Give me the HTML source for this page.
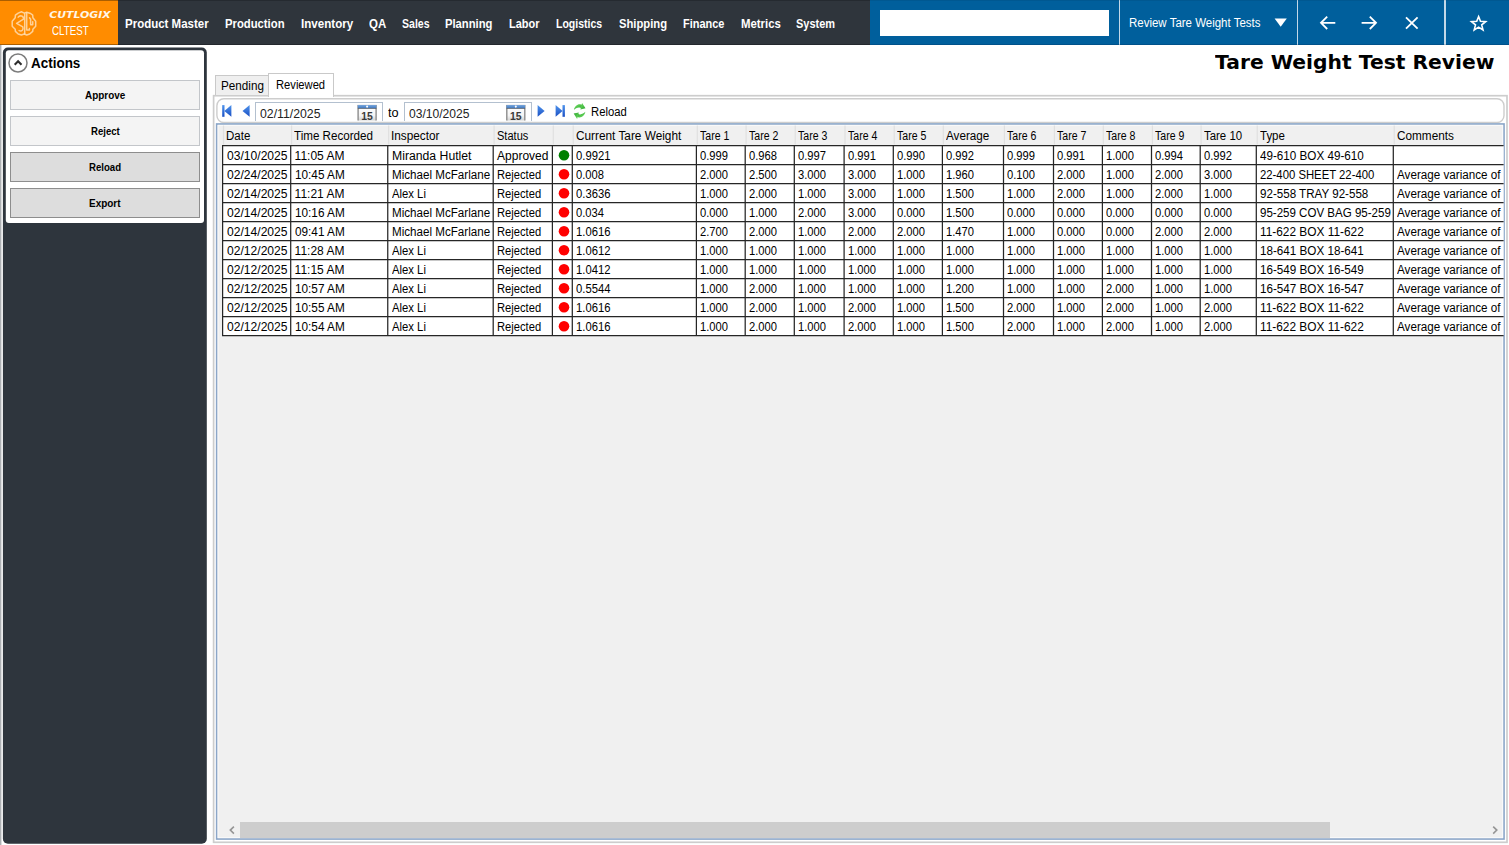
<!DOCTYPE html><html><head><meta charset="utf-8"><title>Tare Weight Test Review</title><style>
html,body{margin:0;padding:0}
body{width:1509px;height:845px;overflow:hidden;position:relative;background:#fff;font-family:"Liberation Sans", sans-serif;font-size:12px;color:#000}
.a{position:absolute}
.t{position:absolute;white-space:pre;line-height:1;display:block;transform-origin:0 50%}
svg{position:absolute;overflow:visible}

</style></head><body>
<!-- top bar -->
<div class="a" id="topbar" style="left:0;top:0;width:1509px;height:45px;background:#2f353c"></div>
<div class="a" id="logo" style="left:0;top:0;width:117.5px;height:45px;background:#ff8c00"></div>
<div class="a" id="bluebar" style="left:869.5px;top:0;width:639.5px;height:45px;background:#005f9c"></div>
<div class="a" id="search" style="left:879.5px;top:9.5px;width:229px;height:26px;background:#fff"></div>
<div class="a" style="left:1118.7px;top:0;width:1.5px;height:45px;background:#c2d8e8"></div>
<div class="a" style="left:1296.6px;top:0;width:1.5px;height:45px;background:#c2d8e8"></div>
<div class="a" style="left:1444px;top:0;width:1.5px;height:45px;background:#c2d8e8"></div>
<div class="a" style="left:0;top:0;width:117.5px;height:1px;background:rgba(0,0,0,0.33)"></div>
<div class="a" style="left:117.5px;top:0;width:752px;height:1px;background:rgba(0,0,0,0.2)"></div>
<div class="a" style="left:869.5px;top:0;width:639.5px;height:1px;background:rgba(0,0,0,0.07)"></div>
<div class="a" style="left:0;top:44px;width:117.5px;height:1px;background:rgba(0,0,0,0.33)"></div>
<div class="a" style="left:117.5px;top:44px;width:752px;height:1px;background:rgba(0,0,0,0.25)"></div>
<div class="a" style="left:869.5px;top:44px;width:639.5px;height:1px;background:rgba(0,20,60,0.18)"></div>
<svg style="left:0;top:0" width="1509" height="45" viewBox="0 0 1509 45">
  <!-- brain logo -->
  <g fill="none" stroke="#ffe1b8" stroke-opacity="0.82" stroke-width="1.5" stroke-linecap="round" stroke-linejoin="round">
    <path d="M21.4 11.8 L24.2 13.1 L26.7 12.2 L30.6 13.5 L32.7 15.2 L32.9 17.8 L35.7 21.2 L35.7 26.3 L32.9 29.3 L32.7 31.4 L29.7 34.0 L26.7 35.0 L24.2 34.0 L21.4 35.0 L18.2 34.0 L15.4 31.4 L15.2 29.3 L12.2 26.3 L12.2 21.2 L15.2 17.8 L15.4 15.2 L18.2 13.1 Z"/>
    <path d="M18.2 17.1 C19.9 15.0 23.7 15.7 23.5 19.1 L16.6 23.4 L22.8 26.9 C23.7 29.7 22.0 31.6 19.1 30.6"/>
    <path d="M24.7 13.7 L24.7 34.0"/>
    <path d="M26.7 13.1 L26.7 29.9 L29.4 29.9 L29.4 28.6"/>
    <path d="M29.5 17.8 L30.6 19.3 L30.6 24.7 L32.7 24.7 L32.7 21.8"/>
  </g>
  <!-- CUTLOGIX wordmark -->
  <text x="49.2" y="18.4" font-family="'DejaVu Sans','Liberation Sans',sans-serif" font-weight="700" font-style="oblique" font-size="8.1" fill="#fff6e8" textLength="61.5" lengthAdjust="spacingAndGlyphs">CUTLOGIX</text>
  <!-- dropdown triangle -->
  <path d="M1274.6 18.4 L1286.8 18.4 L1280.7 26.8 Z" fill="#fff"/>
  <!-- arrows -->
  <g fill="none" stroke="#fff" stroke-width="1.8" stroke-linecap="butt" stroke-linejoin="miter">
    <path d="M1335.3 22.8 L1321.3 22.8 M1327.2 16.6 L1321 22.8 L1327.2 29"/>
    <path d="M1361.6 22.8 L1375.6 22.8 M1369.8 16.6 L1376 22.8 L1369.8 29"/>
    <path d="M1406 17.3 L1417.6 28.7 M1417.6 17.3 L1406 28.7"/>
    <path d="M1478.6 16.6 L1480.5 21.3 L1485.7 21.6 L1481.7 24.9 L1483 29.9 L1478.6 27.1 L1474.2 29.9 L1475.5 24.9 L1471.5 21.6 L1476.7 21.3 Z" stroke-width="1.6"/>
  </g>
</svg>

<!-- left edge strip -->
<div class="a" style="left:0;top:45px;width:1px;height:800px;background:#adb0b3"></div><div class="a" style="left:1px;top:45px;width:1px;height:800px;background:#dcdddf"></div>
<!-- sidebar -->
<svg id="sidebar" style="left:0;top:0" width="210" height="845" viewBox="0 0 210 845">
  <rect x="2.9" y="47.5" width="203.9" height="796.2" rx="5" ry="5" fill="#2e353d"/>
  <rect x="5.8" y="50.2" width="198.2" height="172.8" rx="3" ry="3" fill="#fff"/>
</svg>
<svg style="left:0;top:45px" width="210" height="40" viewBox="0 45 210 40">
  <circle cx="18" cy="63" r="9" fill="#fff" stroke="#7c7c7c" stroke-width="1.5"/>
  <path d="M14.7 64.7 L18.1 61.3 L21.5 64.7" fill="none" stroke="#2e2e2e" stroke-width="2.1"/>
</svg>
<div class="a btn" style="left:10.3px;top:80.0px;width:187.4px;height:28.2px;background:#f4f4f4;border:1px solid #c3c6ca"></div>
<div class="a btn" style="left:10.3px;top:116.0px;width:187.4px;height:28.2px;background:#f4f4f4;border:1px solid #c3c6ca"></div>
<div class="a btn" style="left:10.3px;top:152.0px;width:187.4px;height:28.2px;background:#ddd;border:1px solid #8d8d8d"></div>
<div class="a btn" style="left:10.3px;top:188.0px;width:187.4px;height:28.2px;background:#ddd;border:1px solid #8d8d8d"></div>

<!-- tab control -->
<svg id="frames" style="left:0;top:0" width="1509" height="845" viewBox="0 0 1509 845">
  <rect x="213.6" y="95.7" width="1293.4" height="746.6" fill="#fff" stroke="#cdcdcd" stroke-width="1.7"/>
  <rect x="216.9" y="98.7" width="1287.1" height="23.8" rx="7" ry="7" fill="#fff" stroke="#cdcdcd" stroke-width="1.4"/>
  <rect x="216.7" y="124" width="1287.3" height="715" fill="#f0f0f0" stroke="#8ba6c8" stroke-width="1.7"/>
  <rect x="218" y="125.3" width="1284.7" height="712.4" fill="none" stroke="#fbfbfb" stroke-width="0.9"/>
</svg>
<div class="a" id="tab1" style="left:215.2px;top:75.1px;width:53.8px;height:20px;background:#efefef;border:1.4px solid #c9c9c9;border-bottom:none;box-sizing:border-box"></div>
<div class="a" id="tab2" style="left:268px;top:72.9px;width:66.4px;height:23.8px;background:#fff;border:1.4px solid #c9c9c9;border-bottom:none;box-sizing:border-box"></div>

<!-- toolbar -->
<div class="a" id="tbclip" style="left:217.4px;top:99.6px;width:1286px;height:21px;overflow:hidden">
  <div class="a" style="left:38px;top:2px;width:128px;height:24px;border:1px solid #b3c0cf;box-sizing:border-box;background:#fff"></div>
  <div class="a" style="left:186.6px;top:2px;width:128px;height:24px;border:1px solid #b3c0cf;box-sizing:border-box;background:#fff"></div>
</div>
<svg style="left:0;top:98px" width="640" height="26" viewBox="0 98 640 26">
  <defs>
    <linearGradient id="bl" x1="0" y1="0" x2="0" y2="1"><stop offset="0" stop-color="#4f94ec"/><stop offset="1" stop-color="#1a4fc4"/></linearGradient>
    <linearGradient id="cg" x1="0" y1="0" x2="0" y2="1"><stop offset="0" stop-color="#ffffff"/><stop offset="0.55" stop-color="#f4f4f4"/><stop offset="1" stop-color="#bdbdbd"/></linearGradient>
    <linearGradient id="ch" x1="0" y1="0" x2="0" y2="1"><stop offset="0" stop-color="#7aa7dc"/><stop offset="1" stop-color="#3f78bf"/></linearGradient>
    <clipPath id="tbc"><rect x="217" y="99" width="1290" height="21.6"/></clipPath>
  </defs>
  <g fill="url(#bl)">
    <rect x="222.2" y="105.1" width="2.3" height="11.7"/><path d="M231.4 105.1 L231.4 116.8 L224.3 110.95 Z"/>
    <path d="M249.6 105.1 L249.6 116.8 L242.5 110.95 Z"/>
    <path d="M537.6 105.1 L537.6 116.8 L544.6 110.95 Z"/>
    <path d="M555.6 105.1 L555.6 116.8 L562.6 110.95 Z"/><rect x="562.5" y="105.1" width="2.4" height="11.7"/>
  </g>
  <!-- calendar icons -->
  <g clip-path="url(#tbc)">
    <g>
      <rect x="358.1" y="105.6" width="18" height="18" fill="url(#cg)" stroke="#8d8d8d" stroke-width="1.4"/>
      <rect x="357.8" y="105" width="18.6" height="3.2" fill="url(#ch)"/>
      <rect x="357.8" y="108.1" width="18.6" height="0.8" fill="#5a6470"/>
      <circle cx="367.1" cy="106.6" r="1.05" fill="#fff"/>
      <text x="361.2" y="119.5" font-family="'Liberation Sans',sans-serif" font-size="10.2" font-weight="700" fill="#3a3a3a" textLength="11.6" lengthAdjust="spacingAndGlyphs">15</text>
    </g>
    <g>
      <rect x="506.8" y="105.6" width="18" height="18" fill="url(#cg)" stroke="#8d8d8d" stroke-width="1.4"/>
      <rect x="506.5" y="105" width="18.6" height="3.2" fill="url(#ch)"/>
      <rect x="506.5" y="108.1" width="18.6" height="0.8" fill="#5a6470"/>
      <circle cx="515.8" cy="106.6" r="1.05" fill="#fff"/>
      <text x="509.9" y="119.5" font-family="'Liberation Sans',sans-serif" font-size="10.2" font-weight="700" fill="#3a3a3a" textLength="11.6" lengthAdjust="spacingAndGlyphs">15</text>
    </g>
  </g>
  <!-- reload icon -->
  <defs><linearGradient id="gr" x1="0" y1="0" x2="1" y2="1"><stop offset="0" stop-color="#74e268"/><stop offset="1" stop-color="#27a02a"/></linearGradient></defs>
  <g id="rl1" transform="translate(579.6 110.9)" fill="url(#gr)">
    <path d="M-5.7 -0.9 C-5.3 -4.2 -2.5 -6.7 0.2 -6.6 C1.3 -6.6 2.2 -6.3 3 -5.8 L1.6 -2.8 C0.9 -3.4 0.2 -3.6 -0.6 -3.5 C-2.6 -3.3 -4.4 -2.4 -5.7 -0.9 Z"/>
    <path d="M2.5 -8 L5.9 -2.7 L0.8 -1.5 Z"/>
  </g>
  <g id="rl2" transform="translate(579.6 110.9) rotate(180)" fill="url(#gr)">
    <path d="M-5.7 -0.9 C-5.3 -4.2 -2.5 -6.7 0.2 -6.6 C1.3 -6.6 2.2 -6.3 3 -5.8 L1.6 -2.8 C0.9 -3.4 0.2 -3.6 -0.6 -3.5 C-2.6 -3.3 -4.4 -2.4 -5.7 -0.9 Z"/>
    <path d="M2.5 -8 L5.9 -2.7 L0.8 -1.5 Z"/>
  </g>
</svg>


<!-- grid -->
<div class="a" id="thumb" style="left:240.3px;top:821.7px;width:1090.2px;height:16.5px;background:#cdcdcd"></div>
<svg style="left:0;top:820px" width="1509" height="20" viewBox="0 820 1509 20">
  <path d="M233.9 826.6 L230.3 830.1 L233.9 833.6" fill="none" stroke="#959595" stroke-width="1.6"/>
  <path d="M1493.2 826.6 L1496.8 830.1 L1493.2 833.6" fill="none" stroke="#959595" stroke-width="1.6"/>
</svg>

<svg class="a" style="left:0;top:0" width="1509" height="845" viewBox="0 0 1509 845"><rect x="222.6" y="145.5" width="1281.0" height="190.0" fill="#fff"/><line x1="222.0" y1="145.50" x2="1503.6" y2="145.50" stroke="#262626" stroke-width="1.25"/><line x1="222.0" y1="164.50" x2="1503.6" y2="164.50" stroke="#262626" stroke-width="1.25"/><line x1="222.0" y1="183.50" x2="1503.6" y2="183.50" stroke="#262626" stroke-width="1.25"/><line x1="222.0" y1="202.50" x2="1503.6" y2="202.50" stroke="#262626" stroke-width="1.25"/><line x1="222.0" y1="221.50" x2="1503.6" y2="221.50" stroke="#262626" stroke-width="1.25"/><line x1="222.0" y1="240.50" x2="1503.6" y2="240.50" stroke="#262626" stroke-width="1.25"/><line x1="222.0" y1="259.50" x2="1503.6" y2="259.50" stroke="#262626" stroke-width="1.25"/><line x1="222.0" y1="278.50" x2="1503.6" y2="278.50" stroke="#262626" stroke-width="1.25"/><line x1="222.0" y1="297.50" x2="1503.6" y2="297.50" stroke="#262626" stroke-width="1.25"/><line x1="222.0" y1="316.50" x2="1503.6" y2="316.50" stroke="#262626" stroke-width="1.25"/><line x1="222.0" y1="335.50" x2="1503.6" y2="335.50" stroke="#262626" stroke-width="1.25"/><line x1="222.60" y1="145.5" x2="222.60" y2="335.5" stroke="#262626" stroke-width="1.25"/><line x1="290.70" y1="145.5" x2="290.70" y2="335.5" stroke="#262626" stroke-width="1.25"/><line x1="387.75" y1="145.5" x2="387.75" y2="335.5" stroke="#262626" stroke-width="1.25"/><line x1="493.20" y1="145.5" x2="493.20" y2="335.5" stroke="#262626" stroke-width="1.25"/><line x1="552.40" y1="145.5" x2="552.40" y2="335.5" stroke="#262626" stroke-width="1.25"/><line x1="572.30" y1="145.5" x2="572.30" y2="335.5" stroke="#262626" stroke-width="1.25"/><line x1="696.40" y1="145.5" x2="696.40" y2="335.5" stroke="#262626" stroke-width="1.25"/><line x1="745.20" y1="145.5" x2="745.20" y2="335.5" stroke="#262626" stroke-width="1.25"/><line x1="794.30" y1="145.5" x2="794.30" y2="335.5" stroke="#262626" stroke-width="1.25"/><line x1="844.10" y1="145.5" x2="844.10" y2="335.5" stroke="#262626" stroke-width="1.25"/><line x1="893.30" y1="145.5" x2="893.30" y2="335.5" stroke="#262626" stroke-width="1.25"/><line x1="942.40" y1="145.5" x2="942.40" y2="335.5" stroke="#262626" stroke-width="1.25"/><line x1="1003.50" y1="145.5" x2="1003.50" y2="335.5" stroke="#262626" stroke-width="1.25"/><line x1="1053.50" y1="145.5" x2="1053.50" y2="335.5" stroke="#262626" stroke-width="1.25"/><line x1="1102.40" y1="145.5" x2="1102.40" y2="335.5" stroke="#262626" stroke-width="1.25"/><line x1="1151.50" y1="145.5" x2="1151.50" y2="335.5" stroke="#262626" stroke-width="1.25"/><line x1="1200.20" y1="145.5" x2="1200.20" y2="335.5" stroke="#262626" stroke-width="1.25"/><line x1="1256.30" y1="145.5" x2="1256.30" y2="335.5" stroke="#262626" stroke-width="1.25"/><line x1="1393.30" y1="145.5" x2="1393.30" y2="335.5" stroke="#262626" stroke-width="1.25"/><line x1="223.50" y1="125.5" x2="223.50" y2="144.5" stroke="#e0e0e0" stroke-width="1.2"/><line x1="291.60" y1="125.5" x2="291.60" y2="144.5" stroke="#e0e0e0" stroke-width="1.2"/><line x1="388.65" y1="125.5" x2="388.65" y2="144.5" stroke="#e0e0e0" stroke-width="1.2"/><line x1="494.10" y1="125.5" x2="494.10" y2="144.5" stroke="#e0e0e0" stroke-width="1.2"/><line x1="553.30" y1="125.5" x2="553.30" y2="144.5" stroke="#e0e0e0" stroke-width="1.2"/><line x1="573.20" y1="125.5" x2="573.20" y2="144.5" stroke="#e0e0e0" stroke-width="1.2"/><line x1="697.30" y1="125.5" x2="697.30" y2="144.5" stroke="#e0e0e0" stroke-width="1.2"/><line x1="746.10" y1="125.5" x2="746.10" y2="144.5" stroke="#e0e0e0" stroke-width="1.2"/><line x1="795.20" y1="125.5" x2="795.20" y2="144.5" stroke="#e0e0e0" stroke-width="1.2"/><line x1="845.00" y1="125.5" x2="845.00" y2="144.5" stroke="#e0e0e0" stroke-width="1.2"/><line x1="894.20" y1="125.5" x2="894.20" y2="144.5" stroke="#e0e0e0" stroke-width="1.2"/><line x1="943.30" y1="125.5" x2="943.30" y2="144.5" stroke="#e0e0e0" stroke-width="1.2"/><line x1="1004.40" y1="125.5" x2="1004.40" y2="144.5" stroke="#e0e0e0" stroke-width="1.2"/><line x1="1054.40" y1="125.5" x2="1054.40" y2="144.5" stroke="#e0e0e0" stroke-width="1.2"/><line x1="1103.30" y1="125.5" x2="1103.30" y2="144.5" stroke="#e0e0e0" stroke-width="1.2"/><line x1="1152.40" y1="125.5" x2="1152.40" y2="144.5" stroke="#e0e0e0" stroke-width="1.2"/><line x1="1201.10" y1="125.5" x2="1201.10" y2="144.5" stroke="#e0e0e0" stroke-width="1.2"/><line x1="1257.20" y1="125.5" x2="1257.20" y2="144.5" stroke="#e0e0e0" stroke-width="1.2"/><line x1="1394.20" y1="125.5" x2="1394.20" y2="144.5" stroke="#e0e0e0" stroke-width="1.2"/><circle cx="564.0" cy="155.2" r="5.3" fill="#008000"/><circle cx="564.0" cy="174.2" r="5.3" fill="#ff0000"/><circle cx="564.0" cy="193.2" r="5.3" fill="#ff0000"/><circle cx="564.0" cy="212.2" r="5.3" fill="#ff0000"/><circle cx="564.0" cy="231.2" r="5.3" fill="#ff0000"/><circle cx="564.0" cy="250.2" r="5.3" fill="#ff0000"/><circle cx="564.0" cy="269.2" r="5.3" fill="#ff0000"/><circle cx="564.0" cy="288.2" r="5.3" fill="#ff0000"/><circle cx="564.0" cy="307.2" r="5.3" fill="#ff0000"/><circle cx="564.0" cy="326.2" r="5.3" fill="#ff0000"/></svg>
<span class="t" id="t0" style="left:124.9px;top:16.5px;font-size:13px;color:#fff;font-weight:700;transform:scaleX(0.8836);">Product Master</span>
<span class="t" id="t1" style="left:224.8px;top:16.5px;font-size:13px;color:#fff;font-weight:700;transform:scaleX(0.8676);">Production</span>
<span class="t" id="t2" style="left:300.7px;top:16.5px;font-size:13px;color:#fff;font-weight:700;transform:scaleX(0.8925);">Inventory</span>
<span class="t" id="t3" style="left:368.5px;top:16.5px;font-size:13px;color:#fff;font-weight:700;transform:scaleX(0.8833);">QA</span>
<span class="t" id="t4" style="left:402.0px;top:16.5px;font-size:13px;color:#fff;font-weight:700;transform:scaleX(0.8099);">Sales</span>
<span class="t" id="t5" style="left:445.1px;top:16.5px;font-size:13px;color:#fff;font-weight:700;transform:scaleX(0.8640);">Planning</span>
<span class="t" id="t6" style="left:509.2px;top:16.5px;font-size:13px;color:#fff;font-weight:700;transform:scaleX(0.8450);">Labor</span>
<span class="t" id="t7" style="left:556.4px;top:16.5px;font-size:13px;color:#fff;font-weight:700;transform:scaleX(0.8081);">Logistics</span>
<span class="t" id="t8" style="left:618.6px;top:16.5px;font-size:13px;color:#fff;font-weight:700;transform:scaleX(0.8636);">Shipping</span>
<span class="t" id="t9" style="left:683.2px;top:16.5px;font-size:13px;color:#fff;font-weight:700;transform:scaleX(0.8433);">Finance</span>
<span class="t" id="t10" style="left:741.0px;top:16.5px;font-size:13px;color:#fff;font-weight:700;transform:scaleX(0.8747);">Metrics</span>
<span class="t" id="t11" style="left:796.4px;top:16.5px;font-size:13px;color:#fff;font-weight:700;transform:scaleX(0.8438);">System</span>
<span class="t" id="t12" style="left:1128.7px;top:16.9px;font-size:12px;color:#fff;transform:scaleX(0.9570);">Review Tare Weight Tests</span>
<span class="t" id="t13" style="left:51.9px;top:24.3px;font-size:13px;color:#fff;transform:scaleX(0.7532);">CLTEST</span>
<span class="t" id="t14" style="left:1215.0px;top:52.9px;font-size:19px;color:#000;font-weight:700;font-family:'DejaVu Sans', 'Liberation Sans', sans-serif;transform:scaleX(1.0671);">Tare Weight Test Review</span>
<span class="t" id="t15" style="left:30.9px;top:56.3px;font-size:14px;color:#000;font-weight:700;transform:scaleX(0.9612);">Actions</span>
<span class="t" id="t16" style="left:84.5px;top:90.9px;font-size:10.3px;color:#000;font-weight:700;transform:scaleX(0.9635);">Approve</span>
<span class="t" id="t17" style="left:90.5px;top:126.9px;font-size:10.3px;color:#000;font-weight:700;transform:scaleX(0.9305);">Reject</span>
<span class="t" id="t18" style="left:88.5px;top:162.9px;font-size:10.3px;color:#000;font-weight:700;transform:scaleX(0.9334);">Reload</span>
<span class="t" id="t19" style="left:89.0px;top:198.9px;font-size:10.3px;color:#000;font-weight:700;transform:scaleX(0.9673);">Export</span>
<span class="t" id="t20" style="left:221.0px;top:80.4px;font-size:12px;color:#000;transform:scaleX(0.9740);">Pending</span>
<span class="t" id="t21" style="left:276.2px;top:78.8px;font-size:12px;color:#000;transform:scaleX(0.9316);">Reviewed</span>
<span class="t" id="t22" style="left:259.9px;top:107.6px;font-size:12px;color:#222;transform:scaleX(1.0224);">02/11/2025</span>
<span class="t" id="t23" style="left:387.8px;top:106.6px;font-size:12px;color:#000;transform:scaleX(1.0583);">to</span>
<span class="t" id="t24" style="left:408.6px;top:107.6px;font-size:12px;color:#222;transform:scaleX(1.0073);">03/10/2025</span>
<span class="t" id="t25" style="left:590.6px;top:106.2px;font-size:12px;color:#000;transform:scaleX(0.9387);">Reload</span>
<span class="t" id="t26" style="left:226.2px;top:130.0px;font-size:12px;color:#000;transform:scaleX(0.9582);">Date</span>
<span class="t" id="t27" style="left:294.3px;top:130.0px;font-size:12px;color:#000;transform:scaleX(0.9682);">Time Recorded</span>
<span class="t" id="t28" style="left:391.3px;top:130.0px;font-size:12px;color:#000;transform:scaleX(0.9826);">Inspector</span>
<span class="t" id="t29" style="left:496.8px;top:130.0px;font-size:12px;color:#000;transform:scaleX(0.9197);">Status</span>
<span class="t" id="t30" style="left:575.9px;top:130.0px;font-size:12px;color:#000;transform:scaleX(0.9845);">Current Tare Weight</span>
<span class="t" id="t31" style="left:700.0px;top:130.0px;font-size:12px;color:#000;transform:scaleX(0.8783);">Tare 1</span>
<span class="t" id="t32" style="left:748.8px;top:130.0px;font-size:12px;color:#000;transform:scaleX(0.8783);">Tare 2</span>
<span class="t" id="t33" style="left:797.9px;top:130.0px;font-size:12px;color:#000;transform:scaleX(0.8783);">Tare 3</span>
<span class="t" id="t34" style="left:847.7px;top:130.0px;font-size:12px;color:#000;transform:scaleX(0.8783);">Tare 4</span>
<span class="t" id="t35" style="left:896.9px;top:130.0px;font-size:12px;color:#000;transform:scaleX(0.8783);">Tare 5</span>
<span class="t" id="t36" style="left:946.0px;top:130.0px;font-size:12px;color:#000;transform:scaleX(0.9734);">Average</span>
<span class="t" id="t37" style="left:1007.1px;top:130.0px;font-size:12px;color:#000;transform:scaleX(0.8783);">Tare 6</span>
<span class="t" id="t38" style="left:1057.1px;top:130.0px;font-size:12px;color:#000;transform:scaleX(0.8783);">Tare 7</span>
<span class="t" id="t39" style="left:1106.0px;top:130.0px;font-size:12px;color:#000;transform:scaleX(0.8783);">Tare 8</span>
<span class="t" id="t40" style="left:1155.1px;top:130.0px;font-size:12px;color:#000;transform:scaleX(0.8783);">Tare 9</span>
<span class="t" id="t41" style="left:1203.8px;top:130.0px;font-size:12px;color:#000;transform:scaleX(0.9518);">Tare 10</span>
<span class="t" id="t42" style="left:1259.9px;top:130.0px;font-size:12px;color:#000;transform:scaleX(0.9571);">Type</span>
<span class="t" id="t43" style="left:1396.9px;top:130.0px;font-size:12px;color:#000;transform:scaleX(0.9808);">Comments</span>
<span class="t" id="t44" style="left:226.5px;top:150.3px;font-size:12px;color:#000;transform:scaleX(1.0083);">03/10/2025</span>
<span class="t" id="t45" style="left:294.6px;top:150.3px;font-size:12px;color:#000;">11:05 AM</span>
<span class="t" id="t46" style="left:391.6px;top:150.3px;font-size:12px;color:#000;transform:scaleX(1.0186);">Miranda Hutlet</span>
<span class="t" id="t47" style="left:497.1px;top:150.3px;font-size:12px;color:#000;">Approved</span>
<span class="t" id="t48" style="left:576.2px;top:150.3px;font-size:12px;color:#000;transform:scaleX(0.9386);">0.9921</span>
<span class="t" id="t49" style="left:700.3px;top:150.3px;font-size:12px;color:#000;transform:scaleX(0.9317);">0.999</span>
<span class="t" id="t50" style="left:749.1px;top:150.3px;font-size:12px;color:#000;transform:scaleX(0.9317);">0.968</span>
<span class="t" id="t51" style="left:798.2px;top:150.3px;font-size:12px;color:#000;transform:scaleX(0.9317);">0.997</span>
<span class="t" id="t52" style="left:848.0px;top:150.3px;font-size:12px;color:#000;transform:scaleX(0.9317);">0.991</span>
<span class="t" id="t53" style="left:897.2px;top:150.3px;font-size:12px;color:#000;transform:scaleX(0.9317);">0.990</span>
<span class="t" id="t54" style="left:946.3px;top:150.3px;font-size:12px;color:#000;transform:scaleX(0.9317);">0.992</span>
<span class="t" id="t55" style="left:1007.4px;top:150.3px;font-size:12px;color:#000;transform:scaleX(0.9317);">0.999</span>
<span class="t" id="t56" style="left:1057.4px;top:150.3px;font-size:12px;color:#000;transform:scaleX(0.9317);">0.991</span>
<span class="t" id="t57" style="left:1106.3px;top:150.3px;font-size:12px;color:#000;transform:scaleX(0.9317);">1.000</span>
<span class="t" id="t58" style="left:1155.4px;top:150.3px;font-size:12px;color:#000;transform:scaleX(0.9317);">0.994</span>
<span class="t" id="t59" style="left:1204.1px;top:150.3px;font-size:12px;color:#000;transform:scaleX(0.9317);">0.992</span>
<span class="t" id="t60" style="left:1260.2px;top:150.3px;font-size:12px;color:#000;transform:scaleX(0.9724);">49-610 BOX 49-610</span>
<span class="t" id="t61" style="left:226.5px;top:169.3px;font-size:12px;color:#000;transform:scaleX(1.0083);">02/24/2025</span>
<span class="t" id="t62" style="left:294.6px;top:169.3px;font-size:12px;color:#000;transform:scaleX(0.9802);">10:45 AM</span>
<span class="t" id="t63" style="left:391.6px;top:169.3px;font-size:12px;color:#000;transform:scaleX(0.9677);">Michael McFarlane</span>
<span class="t" id="t64" style="left:497.1px;top:169.3px;font-size:12px;color:#000;transform:scaleX(0.9309);">Rejected</span>
<span class="t" id="t65" style="left:576.2px;top:169.3px;font-size:12px;color:#000;transform:scaleX(0.9317);">0.008</span>
<span class="t" id="t66" style="left:700.3px;top:169.3px;font-size:12px;color:#000;transform:scaleX(0.9317);">2.000</span>
<span class="t" id="t67" style="left:749.1px;top:169.3px;font-size:12px;color:#000;transform:scaleX(0.9317);">2.500</span>
<span class="t" id="t68" style="left:798.2px;top:169.3px;font-size:12px;color:#000;transform:scaleX(0.9317);">3.000</span>
<span class="t" id="t69" style="left:848.0px;top:169.3px;font-size:12px;color:#000;transform:scaleX(0.9317);">3.000</span>
<span class="t" id="t70" style="left:897.2px;top:169.3px;font-size:12px;color:#000;transform:scaleX(0.9317);">1.000</span>
<span class="t" id="t71" style="left:946.3px;top:169.3px;font-size:12px;color:#000;transform:scaleX(0.9317);">1.960</span>
<span class="t" id="t72" style="left:1007.4px;top:169.3px;font-size:12px;color:#000;transform:scaleX(0.9317);">0.100</span>
<span class="t" id="t73" style="left:1057.4px;top:169.3px;font-size:12px;color:#000;transform:scaleX(0.9317);">2.000</span>
<span class="t" id="t74" style="left:1106.3px;top:169.3px;font-size:12px;color:#000;transform:scaleX(0.9317);">1.000</span>
<span class="t" id="t75" style="left:1155.4px;top:169.3px;font-size:12px;color:#000;transform:scaleX(0.9317);">2.000</span>
<span class="t" id="t76" style="left:1204.1px;top:169.3px;font-size:12px;color:#000;transform:scaleX(0.9317);">3.000</span>
<span class="t" id="t77" style="left:1260.2px;top:169.3px;font-size:12px;color:#000;transform:scaleX(0.9430);">22-400 SHEET 22-400</span>
<span class="t" id="t78" style="left:1397.2px;top:169.3px;font-size:12px;color:#000;transform:scaleX(0.9717);">Average variance of</span>
<span class="t" id="t79" style="left:226.5px;top:188.3px;font-size:12px;color:#000;transform:scaleX(1.0083);">02/14/2025</span>
<span class="t" id="t80" style="left:294.6px;top:188.3px;font-size:12px;color:#000;">11:21 AM</span>
<span class="t" id="t81" style="left:391.6px;top:188.3px;font-size:12px;color:#000;transform:scaleX(0.9408);">Alex Li</span>
<span class="t" id="t82" style="left:497.1px;top:188.3px;font-size:12px;color:#000;transform:scaleX(0.9309);">Rejected</span>
<span class="t" id="t83" style="left:576.2px;top:188.3px;font-size:12px;color:#000;transform:scaleX(0.9386);">0.3636</span>
<span class="t" id="t84" style="left:700.3px;top:188.3px;font-size:12px;color:#000;transform:scaleX(0.9317);">1.000</span>
<span class="t" id="t85" style="left:749.1px;top:188.3px;font-size:12px;color:#000;transform:scaleX(0.9317);">2.000</span>
<span class="t" id="t86" style="left:798.2px;top:188.3px;font-size:12px;color:#000;transform:scaleX(0.9317);">1.000</span>
<span class="t" id="t87" style="left:848.0px;top:188.3px;font-size:12px;color:#000;transform:scaleX(0.9317);">3.000</span>
<span class="t" id="t88" style="left:897.2px;top:188.3px;font-size:12px;color:#000;transform:scaleX(0.9317);">1.000</span>
<span class="t" id="t89" style="left:946.3px;top:188.3px;font-size:12px;color:#000;transform:scaleX(0.9317);">1.500</span>
<span class="t" id="t90" style="left:1007.4px;top:188.3px;font-size:12px;color:#000;transform:scaleX(0.9317);">1.000</span>
<span class="t" id="t91" style="left:1057.4px;top:188.3px;font-size:12px;color:#000;transform:scaleX(0.9317);">2.000</span>
<span class="t" id="t92" style="left:1106.3px;top:188.3px;font-size:12px;color:#000;transform:scaleX(0.9317);">1.000</span>
<span class="t" id="t93" style="left:1155.4px;top:188.3px;font-size:12px;color:#000;transform:scaleX(0.9317);">2.000</span>
<span class="t" id="t94" style="left:1204.1px;top:188.3px;font-size:12px;color:#000;transform:scaleX(0.9317);">1.000</span>
<span class="t" id="t95" style="left:1260.2px;top:188.3px;font-size:12px;color:#000;transform:scaleX(0.9663);">92-558 TRAY 92-558</span>
<span class="t" id="t96" style="left:1397.2px;top:188.3px;font-size:12px;color:#000;transform:scaleX(0.9717);">Average variance of</span>
<span class="t" id="t97" style="left:226.5px;top:207.3px;font-size:12px;color:#000;transform:scaleX(1.0083);">02/14/2025</span>
<span class="t" id="t98" style="left:294.6px;top:207.3px;font-size:12px;color:#000;transform:scaleX(0.9802);">10:16 AM</span>
<span class="t" id="t99" style="left:391.6px;top:207.3px;font-size:12px;color:#000;transform:scaleX(0.9677);">Michael McFarlane</span>
<span class="t" id="t100" style="left:497.1px;top:207.3px;font-size:12px;color:#000;transform:scaleX(0.9309);">Rejected</span>
<span class="t" id="t101" style="left:576.2px;top:207.3px;font-size:12px;color:#000;transform:scaleX(0.9317);">0.034</span>
<span class="t" id="t102" style="left:700.3px;top:207.3px;font-size:12px;color:#000;transform:scaleX(0.9317);">0.000</span>
<span class="t" id="t103" style="left:749.1px;top:207.3px;font-size:12px;color:#000;transform:scaleX(0.9317);">1.000</span>
<span class="t" id="t104" style="left:798.2px;top:207.3px;font-size:12px;color:#000;transform:scaleX(0.9317);">2.000</span>
<span class="t" id="t105" style="left:848.0px;top:207.3px;font-size:12px;color:#000;transform:scaleX(0.9317);">3.000</span>
<span class="t" id="t106" style="left:897.2px;top:207.3px;font-size:12px;color:#000;transform:scaleX(0.9317);">0.000</span>
<span class="t" id="t107" style="left:946.3px;top:207.3px;font-size:12px;color:#000;transform:scaleX(0.9317);">1.500</span>
<span class="t" id="t108" style="left:1007.4px;top:207.3px;font-size:12px;color:#000;transform:scaleX(0.9317);">0.000</span>
<span class="t" id="t109" style="left:1057.4px;top:207.3px;font-size:12px;color:#000;transform:scaleX(0.9317);">0.000</span>
<span class="t" id="t110" style="left:1106.3px;top:207.3px;font-size:12px;color:#000;transform:scaleX(0.9317);">0.000</span>
<span class="t" id="t111" style="left:1155.4px;top:207.3px;font-size:12px;color:#000;transform:scaleX(0.9317);">0.000</span>
<span class="t" id="t112" style="left:1204.1px;top:207.3px;font-size:12px;color:#000;transform:scaleX(0.9317);">0.000</span>
<span class="t" id="t113" style="left:1260.2px;top:207.3px;font-size:12px;color:#000;transform:scaleX(0.9612);">95-259 COV BAG 95-259</span>
<span class="t" id="t114" style="left:1397.2px;top:207.3px;font-size:12px;color:#000;transform:scaleX(0.9717);">Average variance of</span>
<span class="t" id="t115" style="left:226.5px;top:226.3px;font-size:12px;color:#000;transform:scaleX(1.0083);">02/14/2025</span>
<span class="t" id="t116" style="left:294.6px;top:226.3px;font-size:12px;color:#000;transform:scaleX(0.9802);">09:41 AM</span>
<span class="t" id="t117" style="left:391.6px;top:226.3px;font-size:12px;color:#000;transform:scaleX(0.9677);">Michael McFarlane</span>
<span class="t" id="t118" style="left:497.1px;top:226.3px;font-size:12px;color:#000;transform:scaleX(0.9309);">Rejected</span>
<span class="t" id="t119" style="left:576.2px;top:226.3px;font-size:12px;color:#000;transform:scaleX(0.9386);">1.0616</span>
<span class="t" id="t120" style="left:700.3px;top:226.3px;font-size:12px;color:#000;transform:scaleX(0.9317);">2.700</span>
<span class="t" id="t121" style="left:749.1px;top:226.3px;font-size:12px;color:#000;transform:scaleX(0.9317);">2.000</span>
<span class="t" id="t122" style="left:798.2px;top:226.3px;font-size:12px;color:#000;transform:scaleX(0.9317);">1.000</span>
<span class="t" id="t123" style="left:848.0px;top:226.3px;font-size:12px;color:#000;transform:scaleX(0.9317);">2.000</span>
<span class="t" id="t124" style="left:897.2px;top:226.3px;font-size:12px;color:#000;transform:scaleX(0.9317);">2.000</span>
<span class="t" id="t125" style="left:946.3px;top:226.3px;font-size:12px;color:#000;transform:scaleX(0.9317);">1.470</span>
<span class="t" id="t126" style="left:1007.4px;top:226.3px;font-size:12px;color:#000;transform:scaleX(0.9317);">1.000</span>
<span class="t" id="t127" style="left:1057.4px;top:226.3px;font-size:12px;color:#000;transform:scaleX(0.9317);">0.000</span>
<span class="t" id="t128" style="left:1106.3px;top:226.3px;font-size:12px;color:#000;transform:scaleX(0.9317);">0.000</span>
<span class="t" id="t129" style="left:1155.4px;top:226.3px;font-size:12px;color:#000;transform:scaleX(0.9317);">2.000</span>
<span class="t" id="t130" style="left:1204.1px;top:226.3px;font-size:12px;color:#000;transform:scaleX(0.9317);">2.000</span>
<span class="t" id="t131" style="left:1260.2px;top:226.3px;font-size:12px;color:#000;transform:scaleX(0.9889);">11-622 BOX 11-622</span>
<span class="t" id="t132" style="left:1397.2px;top:226.3px;font-size:12px;color:#000;transform:scaleX(0.9717);">Average variance of</span>
<span class="t" id="t133" style="left:226.5px;top:245.3px;font-size:12px;color:#000;transform:scaleX(1.0083);">02/12/2025</span>
<span class="t" id="t134" style="left:294.6px;top:245.3px;font-size:12px;color:#000;">11:28 AM</span>
<span class="t" id="t135" style="left:391.6px;top:245.3px;font-size:12px;color:#000;transform:scaleX(0.9408);">Alex Li</span>
<span class="t" id="t136" style="left:497.1px;top:245.3px;font-size:12px;color:#000;transform:scaleX(0.9309);">Rejected</span>
<span class="t" id="t137" style="left:576.2px;top:245.3px;font-size:12px;color:#000;transform:scaleX(0.9386);">1.0612</span>
<span class="t" id="t138" style="left:700.3px;top:245.3px;font-size:12px;color:#000;transform:scaleX(0.9317);">1.000</span>
<span class="t" id="t139" style="left:749.1px;top:245.3px;font-size:12px;color:#000;transform:scaleX(0.9317);">1.000</span>
<span class="t" id="t140" style="left:798.2px;top:245.3px;font-size:12px;color:#000;transform:scaleX(0.9317);">1.000</span>
<span class="t" id="t141" style="left:848.0px;top:245.3px;font-size:12px;color:#000;transform:scaleX(0.9317);">1.000</span>
<span class="t" id="t142" style="left:897.2px;top:245.3px;font-size:12px;color:#000;transform:scaleX(0.9317);">1.000</span>
<span class="t" id="t143" style="left:946.3px;top:245.3px;font-size:12px;color:#000;transform:scaleX(0.9317);">1.000</span>
<span class="t" id="t144" style="left:1007.4px;top:245.3px;font-size:12px;color:#000;transform:scaleX(0.9317);">1.000</span>
<span class="t" id="t145" style="left:1057.4px;top:245.3px;font-size:12px;color:#000;transform:scaleX(0.9317);">1.000</span>
<span class="t" id="t146" style="left:1106.3px;top:245.3px;font-size:12px;color:#000;transform:scaleX(0.9317);">1.000</span>
<span class="t" id="t147" style="left:1155.4px;top:245.3px;font-size:12px;color:#000;transform:scaleX(0.9317);">1.000</span>
<span class="t" id="t148" style="left:1204.1px;top:245.3px;font-size:12px;color:#000;transform:scaleX(0.9317);">1.000</span>
<span class="t" id="t149" style="left:1260.2px;top:245.3px;font-size:12px;color:#000;transform:scaleX(0.9724);">18-641 BOX 18-641</span>
<span class="t" id="t150" style="left:1397.2px;top:245.3px;font-size:12px;color:#000;transform:scaleX(0.9717);">Average variance of</span>
<span class="t" id="t151" style="left:226.5px;top:264.3px;font-size:12px;color:#000;transform:scaleX(1.0083);">02/12/2025</span>
<span class="t" id="t152" style="left:294.6px;top:264.3px;font-size:12px;color:#000;">11:15 AM</span>
<span class="t" id="t153" style="left:391.6px;top:264.3px;font-size:12px;color:#000;transform:scaleX(0.9408);">Alex Li</span>
<span class="t" id="t154" style="left:497.1px;top:264.3px;font-size:12px;color:#000;transform:scaleX(0.9309);">Rejected</span>
<span class="t" id="t155" style="left:576.2px;top:264.3px;font-size:12px;color:#000;transform:scaleX(0.9386);">1.0412</span>
<span class="t" id="t156" style="left:700.3px;top:264.3px;font-size:12px;color:#000;transform:scaleX(0.9317);">1.000</span>
<span class="t" id="t157" style="left:749.1px;top:264.3px;font-size:12px;color:#000;transform:scaleX(0.9317);">1.000</span>
<span class="t" id="t158" style="left:798.2px;top:264.3px;font-size:12px;color:#000;transform:scaleX(0.9317);">1.000</span>
<span class="t" id="t159" style="left:848.0px;top:264.3px;font-size:12px;color:#000;transform:scaleX(0.9317);">1.000</span>
<span class="t" id="t160" style="left:897.2px;top:264.3px;font-size:12px;color:#000;transform:scaleX(0.9317);">1.000</span>
<span class="t" id="t161" style="left:946.3px;top:264.3px;font-size:12px;color:#000;transform:scaleX(0.9317);">1.000</span>
<span class="t" id="t162" style="left:1007.4px;top:264.3px;font-size:12px;color:#000;transform:scaleX(0.9317);">1.000</span>
<span class="t" id="t163" style="left:1057.4px;top:264.3px;font-size:12px;color:#000;transform:scaleX(0.9317);">1.000</span>
<span class="t" id="t164" style="left:1106.3px;top:264.3px;font-size:12px;color:#000;transform:scaleX(0.9317);">1.000</span>
<span class="t" id="t165" style="left:1155.4px;top:264.3px;font-size:12px;color:#000;transform:scaleX(0.9317);">1.000</span>
<span class="t" id="t166" style="left:1204.1px;top:264.3px;font-size:12px;color:#000;transform:scaleX(0.9317);">1.000</span>
<span class="t" id="t167" style="left:1260.2px;top:264.3px;font-size:12px;color:#000;transform:scaleX(0.9724);">16-549 BOX 16-549</span>
<span class="t" id="t168" style="left:1397.2px;top:264.3px;font-size:12px;color:#000;transform:scaleX(0.9717);">Average variance of</span>
<span class="t" id="t169" style="left:226.5px;top:283.3px;font-size:12px;color:#000;transform:scaleX(1.0083);">02/12/2025</span>
<span class="t" id="t170" style="left:294.6px;top:283.3px;font-size:12px;color:#000;transform:scaleX(0.9802);">10:57 AM</span>
<span class="t" id="t171" style="left:391.6px;top:283.3px;font-size:12px;color:#000;transform:scaleX(0.9408);">Alex Li</span>
<span class="t" id="t172" style="left:497.1px;top:283.3px;font-size:12px;color:#000;transform:scaleX(0.9309);">Rejected</span>
<span class="t" id="t173" style="left:576.2px;top:283.3px;font-size:12px;color:#000;transform:scaleX(0.9386);">0.5544</span>
<span class="t" id="t174" style="left:700.3px;top:283.3px;font-size:12px;color:#000;transform:scaleX(0.9317);">1.000</span>
<span class="t" id="t175" style="left:749.1px;top:283.3px;font-size:12px;color:#000;transform:scaleX(0.9317);">2.000</span>
<span class="t" id="t176" style="left:798.2px;top:283.3px;font-size:12px;color:#000;transform:scaleX(0.9317);">1.000</span>
<span class="t" id="t177" style="left:848.0px;top:283.3px;font-size:12px;color:#000;transform:scaleX(0.9317);">1.000</span>
<span class="t" id="t178" style="left:897.2px;top:283.3px;font-size:12px;color:#000;transform:scaleX(0.9317);">1.000</span>
<span class="t" id="t179" style="left:946.3px;top:283.3px;font-size:12px;color:#000;transform:scaleX(0.9317);">1.200</span>
<span class="t" id="t180" style="left:1007.4px;top:283.3px;font-size:12px;color:#000;transform:scaleX(0.9317);">1.000</span>
<span class="t" id="t181" style="left:1057.4px;top:283.3px;font-size:12px;color:#000;transform:scaleX(0.9317);">1.000</span>
<span class="t" id="t182" style="left:1106.3px;top:283.3px;font-size:12px;color:#000;transform:scaleX(0.9317);">2.000</span>
<span class="t" id="t183" style="left:1155.4px;top:283.3px;font-size:12px;color:#000;transform:scaleX(0.9317);">1.000</span>
<span class="t" id="t184" style="left:1204.1px;top:283.3px;font-size:12px;color:#000;transform:scaleX(0.9317);">1.000</span>
<span class="t" id="t185" style="left:1260.2px;top:283.3px;font-size:12px;color:#000;transform:scaleX(0.9724);">16-547 BOX 16-547</span>
<span class="t" id="t186" style="left:1397.2px;top:283.3px;font-size:12px;color:#000;transform:scaleX(0.9717);">Average variance of</span>
<span class="t" id="t187" style="left:226.5px;top:302.3px;font-size:12px;color:#000;transform:scaleX(1.0083);">02/12/2025</span>
<span class="t" id="t188" style="left:294.6px;top:302.3px;font-size:12px;color:#000;transform:scaleX(0.9802);">10:55 AM</span>
<span class="t" id="t189" style="left:391.6px;top:302.3px;font-size:12px;color:#000;transform:scaleX(0.9408);">Alex Li</span>
<span class="t" id="t190" style="left:497.1px;top:302.3px;font-size:12px;color:#000;transform:scaleX(0.9309);">Rejected</span>
<span class="t" id="t191" style="left:576.2px;top:302.3px;font-size:12px;color:#000;transform:scaleX(0.9386);">1.0616</span>
<span class="t" id="t192" style="left:700.3px;top:302.3px;font-size:12px;color:#000;transform:scaleX(0.9317);">1.000</span>
<span class="t" id="t193" style="left:749.1px;top:302.3px;font-size:12px;color:#000;transform:scaleX(0.9317);">2.000</span>
<span class="t" id="t194" style="left:798.2px;top:302.3px;font-size:12px;color:#000;transform:scaleX(0.9317);">1.000</span>
<span class="t" id="t195" style="left:848.0px;top:302.3px;font-size:12px;color:#000;transform:scaleX(0.9317);">2.000</span>
<span class="t" id="t196" style="left:897.2px;top:302.3px;font-size:12px;color:#000;transform:scaleX(0.9317);">1.000</span>
<span class="t" id="t197" style="left:946.3px;top:302.3px;font-size:12px;color:#000;transform:scaleX(0.9317);">1.500</span>
<span class="t" id="t198" style="left:1007.4px;top:302.3px;font-size:12px;color:#000;transform:scaleX(0.9317);">2.000</span>
<span class="t" id="t199" style="left:1057.4px;top:302.3px;font-size:12px;color:#000;transform:scaleX(0.9317);">1.000</span>
<span class="t" id="t200" style="left:1106.3px;top:302.3px;font-size:12px;color:#000;transform:scaleX(0.9317);">2.000</span>
<span class="t" id="t201" style="left:1155.4px;top:302.3px;font-size:12px;color:#000;transform:scaleX(0.9317);">1.000</span>
<span class="t" id="t202" style="left:1204.1px;top:302.3px;font-size:12px;color:#000;transform:scaleX(0.9317);">2.000</span>
<span class="t" id="t203" style="left:1260.2px;top:302.3px;font-size:12px;color:#000;transform:scaleX(0.9889);">11-622 BOX 11-622</span>
<span class="t" id="t204" style="left:1397.2px;top:302.3px;font-size:12px;color:#000;transform:scaleX(0.9717);">Average variance of</span>
<span class="t" id="t205" style="left:226.5px;top:321.3px;font-size:12px;color:#000;transform:scaleX(1.0083);">02/12/2025</span>
<span class="t" id="t206" style="left:294.6px;top:321.3px;font-size:12px;color:#000;transform:scaleX(0.9802);">10:54 AM</span>
<span class="t" id="t207" style="left:391.6px;top:321.3px;font-size:12px;color:#000;transform:scaleX(0.9408);">Alex Li</span>
<span class="t" id="t208" style="left:497.1px;top:321.3px;font-size:12px;color:#000;transform:scaleX(0.9309);">Rejected</span>
<span class="t" id="t209" style="left:576.2px;top:321.3px;font-size:12px;color:#000;transform:scaleX(0.9386);">1.0616</span>
<span class="t" id="t210" style="left:700.3px;top:321.3px;font-size:12px;color:#000;transform:scaleX(0.9317);">1.000</span>
<span class="t" id="t211" style="left:749.1px;top:321.3px;font-size:12px;color:#000;transform:scaleX(0.9317);">2.000</span>
<span class="t" id="t212" style="left:798.2px;top:321.3px;font-size:12px;color:#000;transform:scaleX(0.9317);">1.000</span>
<span class="t" id="t213" style="left:848.0px;top:321.3px;font-size:12px;color:#000;transform:scaleX(0.9317);">2.000</span>
<span class="t" id="t214" style="left:897.2px;top:321.3px;font-size:12px;color:#000;transform:scaleX(0.9317);">1.000</span>
<span class="t" id="t215" style="left:946.3px;top:321.3px;font-size:12px;color:#000;transform:scaleX(0.9317);">1.500</span>
<span class="t" id="t216" style="left:1007.4px;top:321.3px;font-size:12px;color:#000;transform:scaleX(0.9317);">2.000</span>
<span class="t" id="t217" style="left:1057.4px;top:321.3px;font-size:12px;color:#000;transform:scaleX(0.9317);">1.000</span>
<span class="t" id="t218" style="left:1106.3px;top:321.3px;font-size:12px;color:#000;transform:scaleX(0.9317);">2.000</span>
<span class="t" id="t219" style="left:1155.4px;top:321.3px;font-size:12px;color:#000;transform:scaleX(0.9317);">1.000</span>
<span class="t" id="t220" style="left:1204.1px;top:321.3px;font-size:12px;color:#000;transform:scaleX(0.9317);">2.000</span>
<span class="t" id="t221" style="left:1260.2px;top:321.3px;font-size:12px;color:#000;transform:scaleX(0.9889);">11-622 BOX 11-622</span>
<span class="t" id="t222" style="left:1397.2px;top:321.3px;font-size:12px;color:#000;transform:scaleX(0.9717);">Average variance of</span>
</body></html>
